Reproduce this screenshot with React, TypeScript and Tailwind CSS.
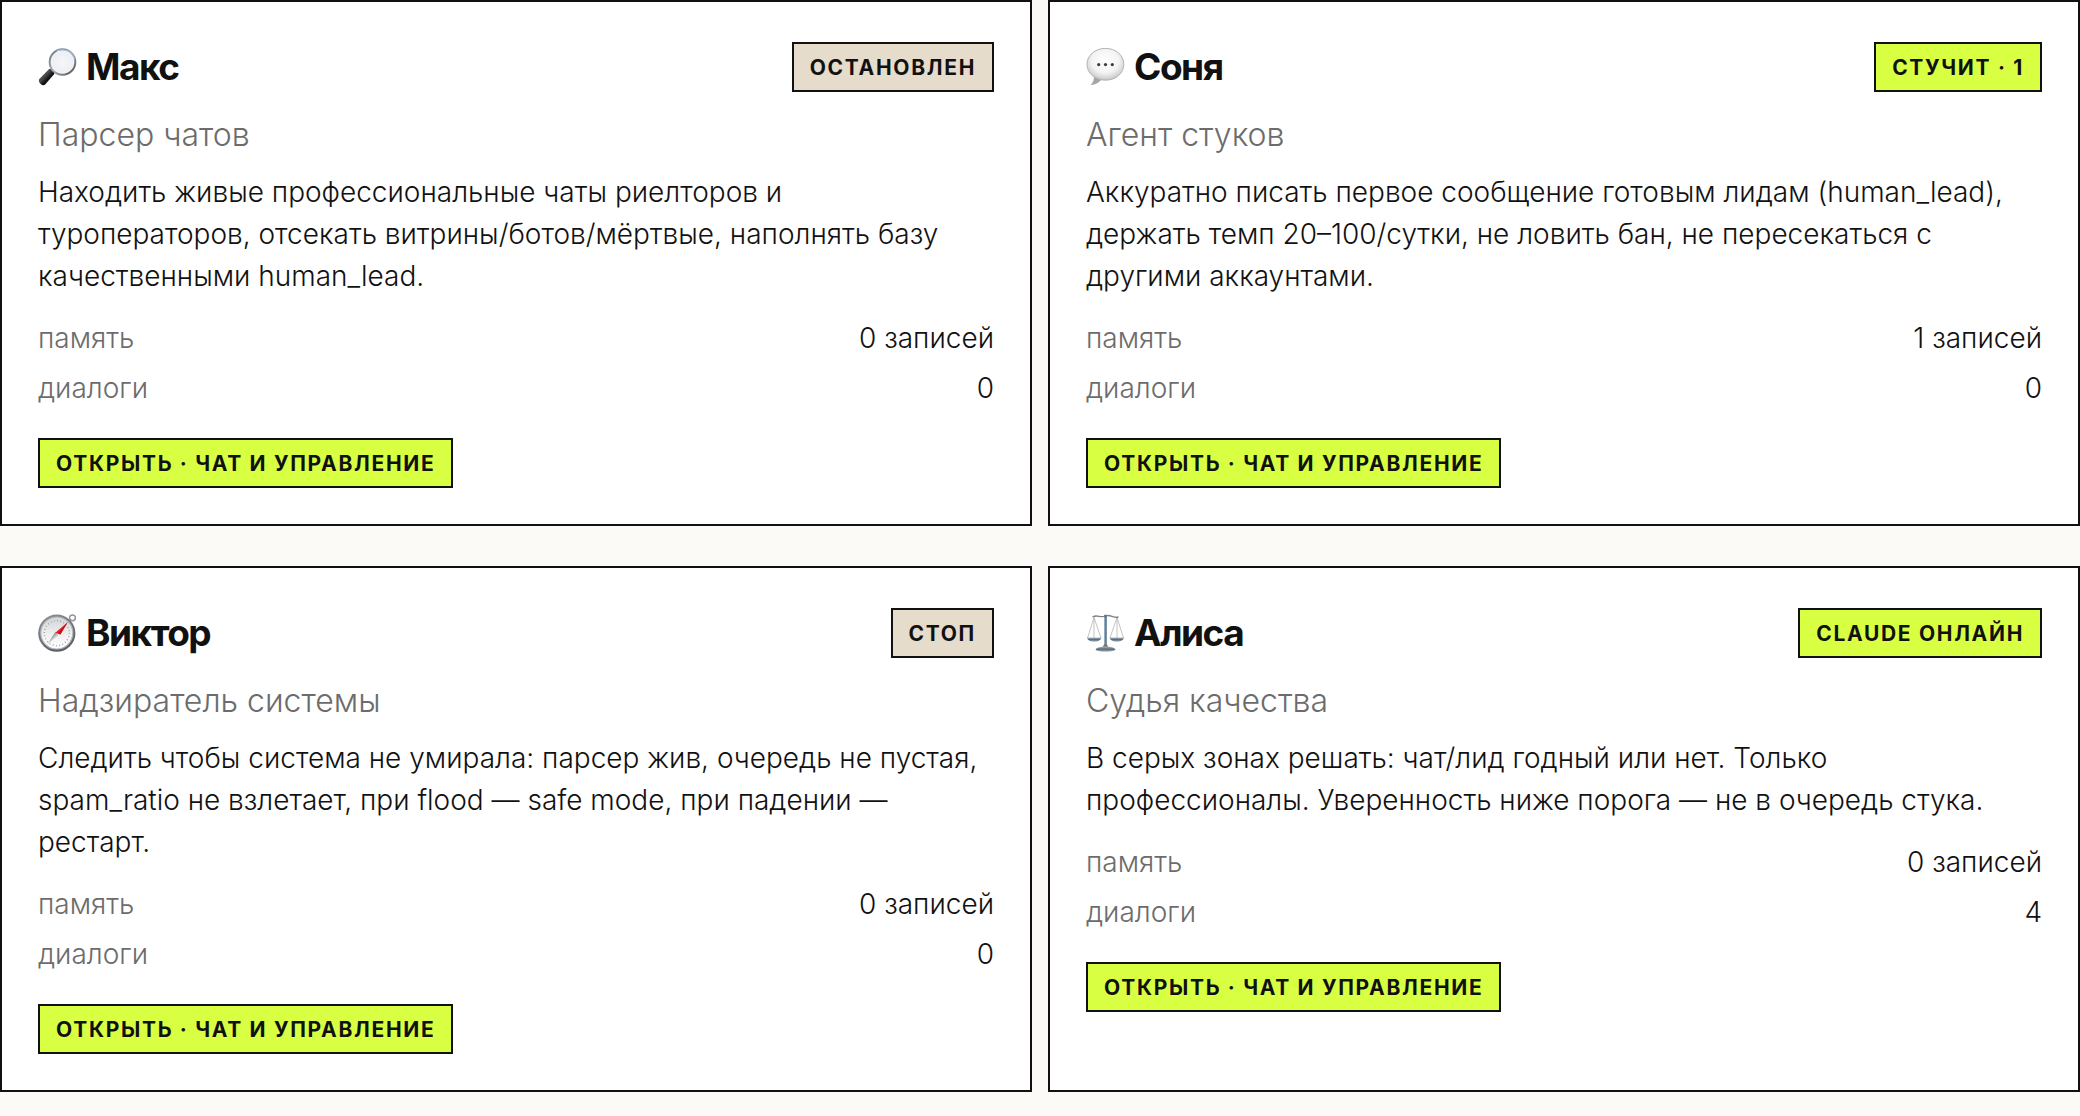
import React from 'react';

function MagnifierIcon() {
  return (
    <svg viewBox="0 0 40 40" className="size-10 shrink-0" aria-hidden="true">
      <defs>
        <linearGradient id="rim" x1="0" y1="0" x2="1" y2="1">
          <stop offset="0" stopColor="#6f7480" />
          <stop offset="0.5" stopColor="#a4acb8" />
          <stop offset="1" stopColor="#4c4c4f" />
        </linearGradient>
        <linearGradient id="handle" x1="0" y1="0" x2="1" y2="1">
          <stop offset="0" stopColor="#0c0c0c" />
          <stop offset="0.4" stopColor="#4c4d4f" />
          <stop offset="0.6" stopColor="#111" />
        </linearGradient>
        <radialGradient id="lens">
          <stop offset="0" stopColor="#f6f6f8" />
          <stop offset="0.8" stopColor="#eeeff2" />
          <stop offset="1" stopColor="#fff" />
        </radialGradient>
      </defs>
      <path d="M12 25.5 16.5 21" stroke="#888" strokeWidth="3" />
      <path d="M1.4 32 11.2 22Q13 21.200 15 23.400 17 25.800 16 27.200L7.200 37.600Q5 39.400 2.400 36.800 0 34.200 1.400 32Z" fill="url(#handle)" />
      <circle cx="24.500" cy="15" r="12.800" fill="url(#lens)" stroke="url(#rim)" strokeWidth="2" />
      <path d="M19 3.400Q32 .6 36.800 12" fill="none" stroke="#a9c6ed" strokeWidth="1" />
    </svg>
  );
}

function SpeechIcon() {
  return (
    <svg viewBox="0 0 40 40" className="size-10 shrink-0" aria-hidden="true">
      <defs>
        <radialGradient id="bubble" cx="0.5" cy="0.4" r="0.62">
          <stop offset="0" stopColor="#fff" />
          <stop offset="0.6" stopColor="#f3f3f3" />
          <stop offset="0.88" stopColor="#d2d2d2" />
          <stop offset="1" stopColor="#b0b0b0" />
        </radialGradient>
      </defs>
      <path d="M8 28Q8.500 34.500 4.500 38.200 12 37.500 16 32Z" fill="#a5a5a5" />
      <path d="M19.500 1.400C30 1.400 37.800 8.300 37.800 17.300S30 33.200 19.500 33.200 1 26.300 1 17.300 9 1.400 19.500 1.400Z" fill="url(#bubble)" stroke="#b4b4b4" strokeWidth="1" />
      <g fill="#3c3c3c">
        <circle cx="12.700" cy="17.600" r="1.600" />
        <circle cx="19.500" cy="17.600" r="1.600" />
        <circle cx="26.300" cy="17.600" r="1.600" />
      </g>
    </svg>
  );
}

function CompassIcon() {
  return (
    <svg viewBox="0 0 40 40" className="size-10 shrink-0" aria-hidden="true">
      <defs>
        <linearGradient id="case" x1="0" y1="0" x2="0.5" y2="1">
          <stop offset="0" stopColor="#8e9297" />
          <stop offset="1" stopColor="#5c6067" />
        </linearGradient>
        <linearGradient id="dial" x1="0" y1="0" x2="0" y2="1">
          <stop offset="0" stopColor="#d2d4d6" />
          <stop offset="0.6" stopColor="#f2f2f2" />
          <stop offset="1" stopColor="#fff" />
        </linearGradient>
      </defs>
      <circle cx="34.500" cy="4.800" r="2.900" fill="#fff" stroke="#93979b" strokeWidth="1.500" />
      <circle cx="18.800" cy="20.200" r="18.600" fill="url(#case)" />
      <circle cx="18.800" cy="20" r="16" fill="url(#dial)" stroke="#b3b7bc" strokeWidth="1.200" />
      <circle cx="18.800" cy="20.200" r="12.500" fill="none" stroke="#8d9092" strokeWidth="1.500" strokeDasharray="0.700 2.573" />
      <path d="M17.300 18.700 20.300 21.700 9.500 31.200Z" fill="#a2a4a6" />
      <path d="M10 30.700 19.500 21" stroke="#ededed" strokeWidth="0.900" />
      <path d="M29.800 9 22.400 21.600 17.300 19.800Z" fill="#e8202a" />
      <path d="M29.800 9 22.400 21.600 20 20.200Z" fill="#c70f1b" />
    </svg>
  );
}

function ScalesIcon() {
  return (
    <svg viewBox="0 0 40 40" className="size-10 shrink-0" aria-hidden="true">
      <defs>
        <linearGradient id="pan" x1="0" y1="0" x2="0" y2="1">
          <stop offset="0" stopColor="#a9bbc9" />
          <stop offset="0.500" stopColor="#566779" />
          <stop offset="1" stopColor="#b3bec8" />
        </linearGradient>
        <linearGradient id="post" x1="0" y1="0" x2="1" y2="0">
          <stop offset="0" stopColor="#b5c8d8" />
          <stop offset="0.600" stopColor="#4e6d89" />
          <stop offset="1" stopColor="#9fb4c5" />
        </linearGradient>
      </defs>
      <g fill="none" stroke="#b5b5b5" strokeWidth="0.800">
        <path d="M8 4.500 1.500 25M8 4.500 15 25M8 4.500V25M31 4.500 24 25M31 4.500 37.500 25M31 4.500V25" />
      </g>
      <path d="M6.500 4Q9 2.500 13 3.300T19.500 3 26 3.300 32.500 4" fill="none" stroke="#7c8388" strokeWidth="1.300" />
      <rect x="18" y="3" width="3" height="30" fill="url(#post)" />
      <circle cx="19.500" cy="3" r="1.600" fill="#65788a" />
      <path d="M.8 24.500H15.600Q14 28.800 8.200 28.800T.8 24.500Z" fill="url(#pan)" />
      <path d="M23.400 24.500H38.200Q36.500 28.800 30.800 28.800T23.400 24.500Z" fill="url(#pan)" />
      <path d="M16.500 34.500 18 31.500H21L22.500 34.500Z" fill="#8b6b52" />
      <path d="M9.500 37Q10 34 19.500 33.600 29 34 29.500 37 26 38.800 19.500 38.800T9.500 37Z" fill="url(#pan)" />
    </svg>
  );
}

type Agent = {
  name: string;
  icon: React.ReactNode;
  status: string;
  active: boolean;
  role: string;
  lines: string[];
  memory: string;
  dialogs: string;
};

const agents: Agent[] = [
  {
    name: 'Макс',
    icon: <MagnifierIcon />,
    status: 'Остановлен',
    active: false,
    role: 'Парсер чатов',
    lines: [
      'Находить живые профессиональные чаты риелторов и',
      'туроператоров, отсекать витрины/ботов/мёртвые, наполнять базу',
      'качественными human_lead.',
    ],
    memory: '0 записей',
    dialogs: '0',
  },
  {
    name: 'Соня',
    icon: <SpeechIcon />,
    status: 'Стучит · 1',
    active: true,
    role: 'Агент стуков',
    lines: [
      'Аккуратно писать первое сообщение готовым лидам (human_lead),',
      'держать темп 20–100/сутки, не ловить бан, не пересекаться с',
      'другими аккаунтами.',
    ],
    memory: '1 записей',
    dialogs: '0',
  },
  {
    name: 'Виктор',
    icon: <CompassIcon />,
    status: 'Стоп',
    active: false,
    role: 'Надзиратель системы',
    lines: [
      'Следить чтобы система не умирала: парсер жив, очередь не пустая,',
      'spam_ratio не взлетает, при flood — safe mode, при падении —',
      'рестарт.',
    ],
    memory: '0 записей',
    dialogs: '0',
  },
  {
    name: 'Алиса',
    icon: <ScalesIcon />,
    status: 'Claude онлайн',
    active: true,
    role: 'Судья качества',
    lines: [
      'В серых зонах решать: чат/лид годный или нет. Только',
      'профессионалы. Уверенность ниже порога — не в очередь стука.',
    ],
    memory: '0 записей',
    dialogs: '4',
  },
];

function AgentCard({ agent }: { agent: Agent }) {
  return (
    <article className="border-2 border-[#111] bg-white px-9 pt-10 pb-9">
      <header className="flex items-center justify-between gap-4">
        <h2 className="flex items-center gap-2 text-[37px] leading-[50px] font-bold tracking-[-0.04em]">
          {agent.icon}
          {agent.name}
        </h2>
        <span
          className={
            'border-2 border-[#111] px-4 pt-0.5 text-[21px] leading-[44px] font-bold tracking-[0.08em] uppercase ' +
            (agent.active ? 'bg-[#d9ff43]' : 'bg-[#e6dccb]')
          }
        >
          {agent.status}
        </span>
      </header>
      <p className="mt-[18px] text-[32px] leading-[50px] font-light text-[#6c6c6c]">{agent.role}</p>
      <p className="mt-[11px] text-[28px] leading-[42px] font-light">
        {agent.lines.map((line, i) => (
          <React.Fragment key={line}>
            {i > 0 && <br />}
            {line}
          </React.Fragment>
        ))}
      </p>
      <dl className="mt-5 grid gap-2 text-[28px] leading-[42px] font-light">
        <div className="flex justify-between">
          <dt className="text-[#6c6c6c]">память</dt>
          <dd>{agent.memory}</dd>
        </div>
        <div className="flex justify-between">
          <dt className="text-[#6c6c6c]">диалоги</dt>
          <dd>{agent.dialogs}</dd>
        </div>
      </dl>
      <button
        type="button"
        className="mt-[29px] block cursor-pointer border-2 border-[#111] bg-[#d9ff43] px-4 pt-0.5 text-[21px] leading-[44px] font-bold tracking-[0.08em] uppercase"
      >
        Открыть · чат и управление
      </button>
    </article>
  );
}

export default function App() {
  return (
    <main className="grid min-h-screen grid-cols-2 content-start gap-x-4 gap-y-10 bg-[#fbfaf6] font-['Inter',sans-serif] text-[#111]">
      {agents.map((agent) => (
        <AgentCard key={agent.name} agent={agent} />
      ))}
    </main>
  );
}
